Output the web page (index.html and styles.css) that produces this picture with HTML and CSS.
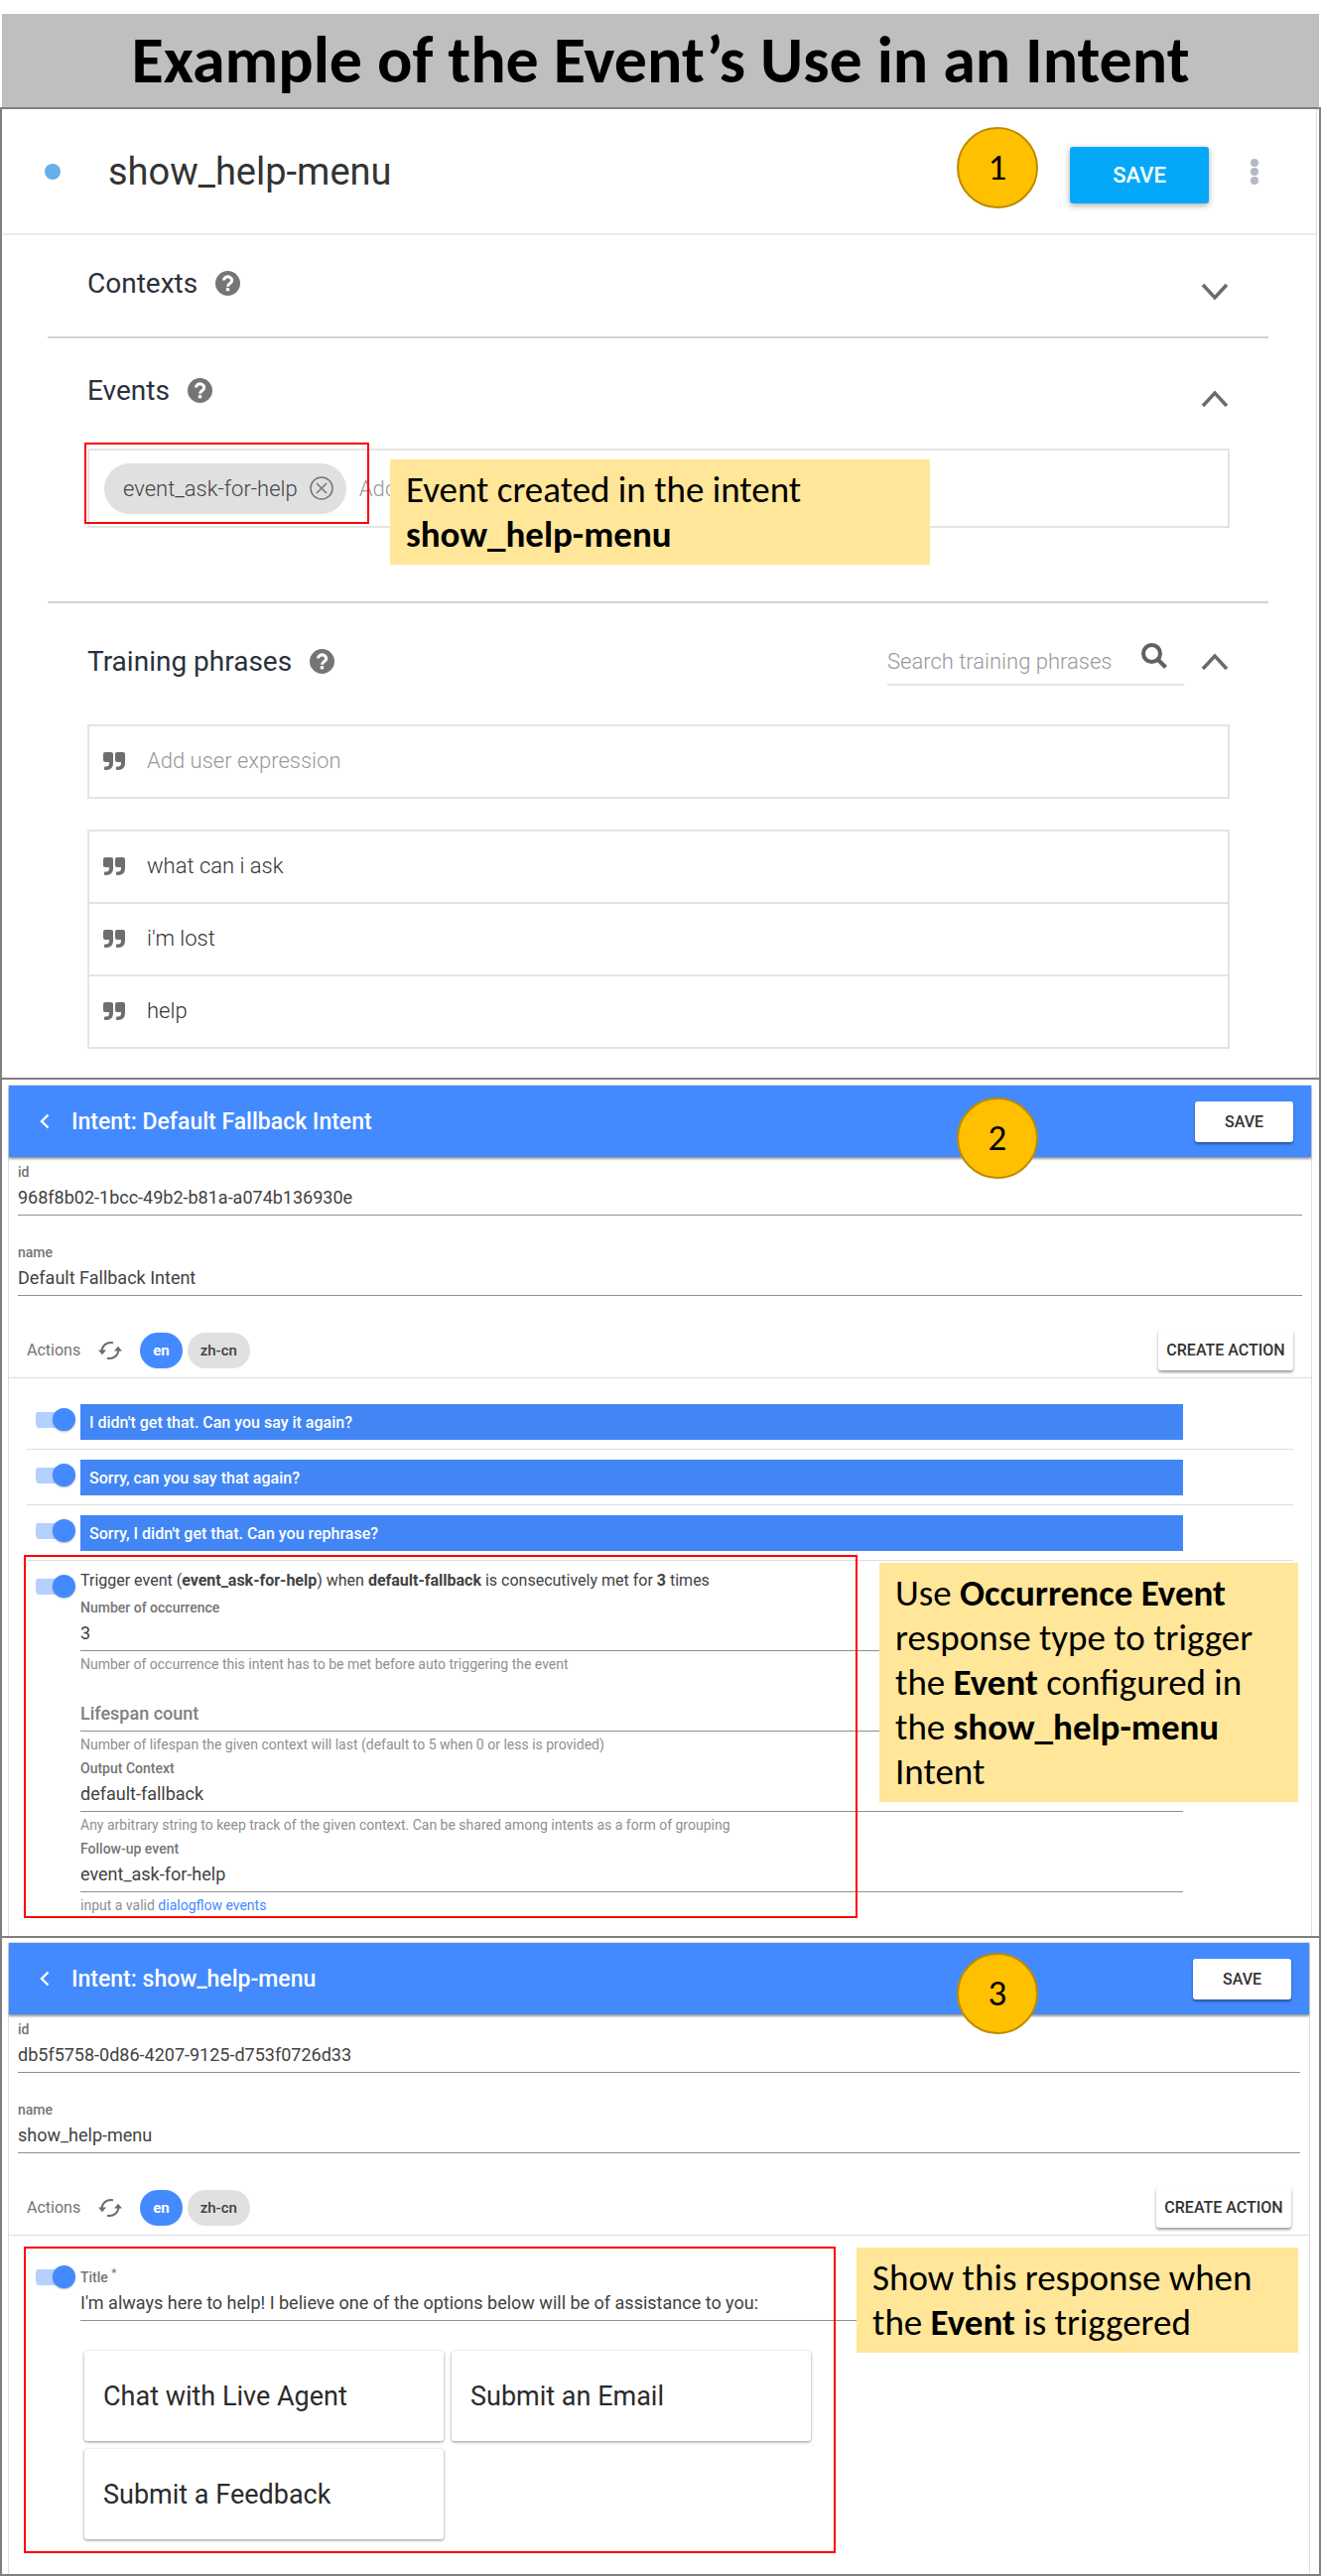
FILE: index.html
```html
<!DOCTYPE html>
<html lang="en">
<head>
<meta charset="utf-8">
<meta name="viewport" content="width=device-width, initial-scale=1">
<title>Example of the Event’s Use in an Intent</title>
<link rel="stylesheet" href="styles.css">
</head>
<body>
<svg class="defs" aria-hidden="true">
  <symbol id="i-help" viewBox="0 0 24 24"><circle cx="12" cy="12" r="12" fill="currentColor"/><path d="M8.2 9.2a3.9 3.4 0 1 1 6 2.8c-1.500 1-2.200 1.500-2.200 3" fill="none" stroke="#fff" stroke-width="3"/><rect x="10.400" y="16.500" width="3.200" height="3" fill="#fff"/></symbol>
  <symbol id="i-down" viewBox="0 0 28 18"><path d="M2 2l12 13L26 2" fill="none" stroke="currentColor" stroke-width="3.500"/></symbol>
  <symbol id="i-up" viewBox="0 0 28 18"><path d="M2 16L14 3l12 13" fill="none" stroke="currentColor" stroke-width="3.500"/></symbol>
  <symbol id="i-quote" viewBox="0 0 22 18"><path d="M2 0h6q2 0 2 2v9q0 7-7 7H2q-1 0-1-1v-1.500q0-1 1-1h1q3 0 3-3.500v-1H2q-2 0-2-2V2q0-2 2-2zM14 0h6q2 0 2 2v9q0 7-7 7h-1q-1 0-1-1v-1.500q0-1 1-1h1q3 0 3-3.500v-1h-4q-2 0-2-2V2q0-2 2-2z" fill="currentColor"/></symbol>
  <symbol id="i-back" viewBox="0 0 10 16"><path d="M8.500 1.500L2 8l6.500 6.500" fill="none" stroke="currentColor" stroke-width="2.400"/></symbol>
  <symbol id="i-sync" viewBox="0 0 24 20"><path d="M3.500 11.500C3.500 5 9 .8 15 2.300M20.500 8.500c0 6.500-5.500 10.700-11.500 9.200" fill="none" stroke="currentColor" stroke-width="2"/><path d="M0 9.500h8l-4 4.800zM16 10.500h8l-4-4.800z" fill="currentColor"/></symbol>
</svg>

<h1 class="banner">Example of the Event’s Use in an Intent</h1>

<main class="frame">
  <section class="panel">
    <div class="editor">
      <header class="editor-head">
        <span class="dot"></span>
        <h2 class="editor-title">show_help-menu</h2>
        <button class="save-main" type="button">SAVE</button>
        <button class="more" type="button" aria-label="More"><span></span><span></span><span></span></button>
      </header>

      <section class="block block-contexts">
        <div class="block-head">
          <h3>Contexts</h3><svg class="help"><use href="#i-help"/></svg>
          <button class="fold fold-low" type="button" aria-label="Expand contexts"><svg><use href="#i-down"/></svg></button>
        </div>
      </section>

      <section class="block block-events">
        <div class="block-head">
          <h3>Events</h3><svg class="help"><use href="#i-help"/></svg>
          <button class="fold fold-low" type="button" aria-label="Collapse events"><svg><use href="#i-up"/></svg></button>
        </div>
        <div class="event-box">
          <span class="event-chip">event_ask-for-help
            <button type="button" aria-label="Remove event"><svg viewBox="0 0 24 24"><circle cx="12" cy="12" r="11"/><path d="M7 7l10 10M17 7L7 17"/></svg></button>
          </span>
          <input type="text" placeholder="Add event" aria-label="Add event">
        </div>
      </section>

      <section class="block block-phrases">
        <div class="block-head">
          <h3>Training phrases</h3><svg class="help"><use href="#i-help"/></svg>
          <div class="search">
            <input type="search" placeholder="Search training phrases" aria-label="Search training phrases">
            <svg viewBox="0 0 26 26"><circle cx="10.500" cy="10.500" r="8.500"/><path d="M16.500 16.500l8 8"/></svg>
          </div>
          <button class="fold" type="button" aria-label="Collapse training phrases"><svg><use href="#i-up"/></svg></button>
        </div>
        <div class="phrase phrase-new"><svg class="quote"><use href="#i-quote"/></svg><input type="text" placeholder="Add user expression" aria-label="Add user expression"></div>
        <ul class="phrases">
          <li class="phrase"><svg class="quote"><use href="#i-quote"/></svg>what can i ask</li>
          <li class="phrase"><svg class="quote"><use href="#i-quote"/></svg>i'm lost</li>
          <li class="phrase"><svg class="quote"><use href="#i-quote"/></svg>help</li>
        </ul>
      </section>
    </div>
    <span class="badge badge-one">1</span>
    <div class="outline outline-event"></div>
    <p class="note note-event">Event created in the intent <b>show_help-menu</b></p>
  </section>

  <section class="panel">
    <div class="card">
      <header class="bar">
        <button class="back" type="button" aria-label="Back"><svg><use href="#i-back"/></svg></button>
        <h2>Intent: Default Fallback Intent</h2>
        <button class="raised save" type="button">SAVE</button>
      </header>
      <div class="form">
        <div class="field"><label for="id-a">id</label><input id="id-a" type="text" value="968f8b02-1bcc-49b2-b81a-a074b136930e"></div>
        <div class="field"><label for="name-a">name</label><input id="name-a" type="text" value="Default Fallback Intent"></div>
      </div>
      <div class="toolbar">
        <span class="toolbar-title">Actions</span>
        <button class="sync" type="button" aria-label="Refresh"><svg><use href="#i-sync"/></svg></button>
        <button class="lang lang-on" type="button">en</button>
        <button class="lang" type="button">zh-cn</button>
        <button class="raised create" type="button">CREATE ACTION</button>
      </div>
      <div class="actions">
        <div class="action"><input class="toggle" type="checkbox" checked aria-label="Enable response 1"><input class="reply" type="text" value="I didn't get that. Can you say it again?" aria-label="Response 1"></div>
        <div class="action"><input class="toggle" type="checkbox" checked aria-label="Enable response 2"><input class="reply" type="text" value="Sorry, can you say that again?" aria-label="Response 2"></div>
        <div class="action"><input class="toggle" type="checkbox" checked aria-label="Enable response 3"><input class="reply" type="text" value="Sorry, I didn't get that. Can you rephrase?" aria-label="Response 3"></div>
        <div class="action action-last"><input class="toggle" type="checkbox" checked aria-label="Enable occurrence event">
          <div class="action-body">
            <p class="summary">Trigger event (<b>event_ask-for-help</b>) when <b>default-fallback</b> is consecutively met for <b>3</b> times</p>
            <div class="fields">
              <div class="field"><label for="occ">Number of occurrence</label><input id="occ" type="text" value="3"><p class="hint">Number of occurrence this intent has to be met before auto triggering the event</p></div>
              <div class="field field-empty"><input type="text" placeholder="Lifespan count" aria-label="Lifespan count"><p class="hint">Number of lifespan the given context will last (default to 5 when 0 or less is provided)</p></div>
              <div class="field"><label for="ctx">Output Context</label><input id="ctx" type="text" value="default-fallback"><p class="hint">Any arbitrary string to keep track of the given context. Can be shared among intents as a form of grouping</p></div>
              <div class="field"><label for="follow">Follow-up event</label><input id="follow" type="text" value="event_ask-for-help"><p class="hint">input a valid <a href="#">dialogflow events</a></p></div>
            </div>
          </div>
        </div>
      </div>
    </div>
    <span class="badge badge-two">2</span>
    <div class="outline outline-trigger"></div>
    <p class="note note-trigger">Use <b>Occurrence Event</b> response type to trigger the <b>Event</b> configured in the <b>show_help-menu</b> Intent</p>
  </section>

  <section class="panel panel-last">
    <div class="card">
      <header class="bar">
        <button class="back" type="button" aria-label="Back"><svg><use href="#i-back"/></svg></button>
        <h2>Intent: show_help-menu</h2>
        <button class="raised save" type="button">SAVE</button>
      </header>
      <div class="form">
        <div class="field"><label for="id-b">id</label><input id="id-b" type="text" value="db5f5758-0d86-4207-9125-d753f0726d33"></div>
        <div class="field"><label for="name-b">name</label><input id="name-b" type="text" value="show_help-menu"></div>
      </div>
      <div class="toolbar">
        <span class="toolbar-title">Actions</span>
        <button class="sync" type="button" aria-label="Refresh"><svg><use href="#i-sync"/></svg></button>
        <button class="lang lang-on" type="button">en</button>
        <button class="lang" type="button">zh-cn</button>
        <button class="raised create" type="button">CREATE ACTION</button>
      </div>
      <div class="actions">
        <div class="action action-menu"><input class="toggle" type="checkbox" checked aria-label="Enable help menu">
          <div class="action-body">
            <div class="field field-title"><label for="title">Title <sup>*</sup></label><input id="title" type="text" value="I'm always here to help! I believe one of the options below will be of assistance to you:"></div>
            <div class="options">
              <button type="button">Chat with Live Agent</button>
              <button type="button">Submit an Email</button>
              <button type="button">Submit a Feedback</button>
            </div>
          </div>
        </div>
      </div>
    </div>
    <span class="badge badge-three">3</span>
    <div class="outline outline-menu"></div>
    <p class="note note-menu">Show this response when the <b>Event</b> is triggered</p>
  </section>
</main>
</body>
</html>
```
FILE: styles.css
```css
* { box-sizing: border-box; }

body {
  margin: 0;
  padding-top: 14px;
  background: #fff;
  color: #424242;
  font-family: Roboto, "Liberation Sans", sans-serif;
}

h1, h2, h3, p, ul { margin: 0; padding: 0; }
ul { list-style: none; }
svg { display: block; }
.defs { position: absolute; width: 0; height: 0; }

button, input {
  margin: 0;
  padding: 0;
  border: 0;
  border-radius: 0;
  background: none;
  color: inherit;
  font: inherit;
  outline: 0;
}

input { min-width: 0; }

.banner {
  margin: 0 2px;
  background: #bfbfbf;
  color: #000;
  font: 700 66px/94px Carlito, Lato, sans-serif;
  text-align: center;
}

.frame { border: 2px solid #7f7f7f; }
.panel { position: relative; border-bottom: 2px solid #7f7f7f; padding: 5px 7px 0 6px; }
.panel:first-child { padding: 0 2px 0 0; }
.panel-last { border-bottom: 0; padding-top: 4px; padding-right: 9px; }

/* Intent editor */
.editor { border-right: 1px solid #dcdcdc; padding-bottom: 29px; }

.editor-head {
  display: flex;
  align-items: center;
  height: 127px;
  padding: 0 58px 0 43px;
  border-bottom: 2px solid #ebebeb;
}

.dot { width: 16px; height: 16px; border-radius: 50%; background: #66b0ea; }
.editor-title { margin-left: 48px; color: #333; font-size: 38px; font-weight: 400; }

.save-main {
  width: 140px;
  height: 57px;
  margin: 8px 42px 0 auto;
  border-radius: 3px;
  background: #03a9f8;
  box-shadow: 0 2px 6px rgba(0, 0, 0, .35);
  color: #fff;
  font-size: 22px;
  font-weight: 500;
}

.more { display: grid; gap: 1px; width: 8px; }
.more span { width: 8px; height: 8px; border-radius: 50%; background: #b4b8c4; }

.block { margin: 0 48px 0 46px; padding: 0 39px 0 40px; }
.block-contexts { padding-top: 24px; padding-bottom: 29px; border-bottom: 2px solid #d8d1d1; }
.block-events { padding-top: 28px; padding-bottom: 74px; border-bottom: 2px solid #d8d1d1; }
.block-phrases { padding-top: 34px; }
.block-head { display: flex; align-items: center; height: 49px; padding-right: 1px; }
.block-head h3 { color: #2b303b; font-size: 28px; font-weight: 400; }
.help { width: 25px; height: 25px; margin-left: 18px; color: #757575; }
.fold { margin-left: auto; color: #6b6b6b; }
.fold svg { width: 28px; height: 18px; }
.fold-low { padding-top: 16px; }

.event-box {
  display: flex;
  align-items: center;
  height: 80px;
  margin-top: 34px;
  padding-left: 15px;
  border: 2px solid #e4e4e4;
  font-size: 22px;
  font-weight: 300;
}

.event-chip {
  display: flex;
  align-items: center;
  gap: 12px;
  height: 51px;
  padding: 0 13px 0 19px;
  border-radius: 26px;
  background: #e0e0e0;
  color: #444;
}

.event-chip svg { width: 24px; height: 24px; fill: none; stroke: #757575; stroke-width: 1.5; }
.event-box input { flex: 1; margin-left: 13px; }
input::placeholder { color: #999; opacity: 1; }

.search {
  display: flex;
  align-items: center;
  align-self: flex-end;
  width: 299px;
  height: 48px;
  margin: 0 17px 0 auto;
  padding-right: 17px;
  border-bottom: 2px solid #e4e4e4;
}

.search + .fold { margin-left: 0; }
.search input { flex: 1; font-size: 22px; font-weight: 300; }
.search svg { width: 26px; height: 26px; margin-bottom: 10px; fill: none; stroke: #616161; stroke-width: 4; }

.phrase {
  display: flex;
  align-items: center;
  gap: 22px;
  height: 73px;
  padding: 0 14px 2px;
  border-bottom: 2px solid #e4e4e4;
  font-size: 22px;
  font-weight: 300;
  color: #333;
}

.phrase input { flex: 1; }
.quote { width: 22px; height: 18px; color: #6e6e6e; }
.phrase-new { height: 75px; margin: 39px 0 31px; border: 2px solid #e4e4e4; }
.phrases { border: 2px solid #e4e4e4; border-bottom: 0; }

/* Intent cards */
.card { border: 1px solid #dedede; border-bottom: 0; padding-bottom: 23px; }

.bar {
  display: flex;
  align-items: center;
  height: 72px;
  padding: 0 18px 0 31px;
  background: #448aff;
  box-shadow: 0 2px 2px rgba(0, 0, 0, .4);
  color: #fff;
}

.bar h2 { margin-left: 22px; font-size: 23px; font-weight: 500; }
.back svg { width: 10px; height: 16px; }

.raised {
  height: 41px;
  border-radius: 3px;
  background: #fff;
  box-shadow: 0 2px 3px rgba(0, 0, 0, .4);
  color: #333;
  font-size: 16px;
  font-weight: 500;
}

.save { width: 99px; margin-left: auto; }
.create { width: 136px; margin-left: auto; }

.form { display: grid; gap: 29px; padding: 7px 9px 0; }
.field label { display: block; margin-bottom: 5px; color: #757575; font-size: 14px; font-weight: 500; line-height: 16px; }
.field label sup { line-height: 0; }

.field input {
  display: block;
  width: 100%;
  height: 31px;
  padding-bottom: 6px;
  border-bottom: 1px solid #8f8f8f;
  font-size: 18px;
}

.field-empty { padding-top: 21px; }
.field-empty input::placeholder { color: #808080; font-weight: 500; }
.hint { margin-top: 5px; color: #8f8f8f; font-size: 14px; line-height: 16px; }
.hint a { color: #448aff; text-decoration: none; }

.toolbar {
  display: flex;
  align-items: center;
  padding: 34px 18px 7px;
  border-bottom: 1px solid #dedede;
}

.toolbar-title { color: #757575; font-size: 16px; }
.sync { margin: 0 18px; color: #6b6b6b; }
.sync svg { width: 24px; height: 20px; }

.lang {
  height: 36px;
  margin-right: 5px;
  padding: 0 13px;
  border-radius: 18px;
  background: #e0e0e0;
  font-size: 15px;
  font-weight: 500;
}

.lang-on { background: #448aff; color: #fff; font-weight: 700; }
.toolbar .create { margin-left: auto; }

.actions { padding: 16px 18px 0; }

.action {
  display: flex;
  gap: 5px;
  padding: 10px 111px 9px 9px;
  border-bottom: 1px solid #dedede;
}

.action-last, .action-menu { border-bottom: 0; padding-bottom: 0; }
.action-body { flex: 1; min-width: 0; }

.toggle {
  flex: none;
  appearance: none;
  width: 40px;
  height: 23px;
  margin-top: 4px;
  background: linear-gradient(#b4d0ff, #b4d0ff) 0 50% / 34px 16px no-repeat;
  border-radius: 8px;
}

.toggle::before {
  content: "";
  display: block;
  width: 23px;
  height: 23px;
  margin-left: 17px;
  border-radius: 50%;
  background: #448aff;
  box-shadow: 0 1px 2px rgba(0, 0, 0, .25);
}

.reply { flex: 1; height: 36px; padding: 0 9px; background: #4286f5; color: #fff; font-size: 16px; font-weight: 500; }
.summary { font-size: 16px; line-height: 20px; }
.fields { display: grid; gap: 8px; margin-top: 9px; }

.field-title { padding-top: 8px; }
.options { display: grid; grid-template-columns: repeat(2, minmax(0, 362px)); gap: 8px; padding: 30px 0 12px 4px; }

.options button {
  height: 91px;
  padding-left: 19px;
  border-radius: 3px;
  box-shadow: 0 1px 3px rgba(0, 0, 0, .45);
  color: #2b2b2b;
  font-size: 27px;
  text-align: left;
}

/* Annotations laid over the screens */
.badge {
  position: absolute;
  right: 283px;
  width: 82px;
  height: 82px;
  border: 2px solid #bc8c00;
  border-radius: 50%;
  background: #ffc000;
  color: #000;
  font: 37px/78px Carlito, Lato, sans-serif;
  text-align: center;
}

.badge-one { top: 18px; }
.badge-two { top: 18px; }
.badge-three { top: 15px; }

.outline { position: absolute; border: 2px solid #f00; pointer-events: none; }
.outline-event { top: 336px; left: 83px; width: 287px; height: 82px; }
.outline-trigger { top: 479px; left: 22px; width: 840px; height: 366px; }
.outline-menu { top: 311px; left: 22px; width: 818px; height: 309px; }

.note {
  position: absolute;
  padding: 8px 16px;
  background: #ffe699;
  color: #000;
  font: 37px/45px Carlito, Lato, sans-serif;
}

.note-event { top: 353px; left: 391px; width: 544px; }
.note-trigger { top: 487px; right: 21px; width: 422px; }
.note-menu { top: 312px; right: 21px; width: 445px; }

@media (min-height: 2000px) {
  .frame { display: flex; flex-direction: column; min-height: calc(100vh - 108px); }
  .panel-last { flex: 1; display: flex; flex-direction: column; }
  .panel-last .card { flex: 1; }
}
```
